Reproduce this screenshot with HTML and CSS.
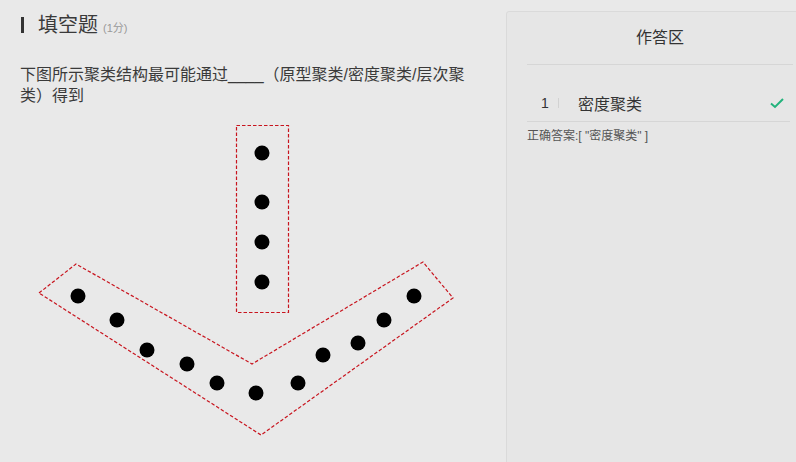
FILE: index.html
```html
<!DOCTYPE html>
<html lang="zh">
<head>
<meta charset="utf-8">
<link rel="stylesheet" href="styles.css">
</head>
<body>
<div class="page">
  <main class="question">
    <div class="q-head">
      <span class="q-bar"></span>
      <span class="q-type">填空题</span>
      <span class="q-score">(1分)</span>
    </div>
    <p class="q-text">下图所示聚类结构最可能通过____（原型聚类/密度聚类/层次聚类）得到</p>
    <svg class="q-figure" width="460" height="330" viewBox="20 115 460 330">
      <g fill="none" stroke="#c8141e" stroke-width="1.2" stroke-dasharray="3.5 2">
        <rect x="236.5" y="125.5" width="52" height="187"/>
        <polygon points="39,293 76,264 252,364 423,262 453,298 261,435"/>
      </g>
      <g fill="#000">
        <circle cx="262" cy="153" r="7.5"/>
        <circle cx="262" cy="202" r="7.5"/>
        <circle cx="262" cy="242" r="7.5"/>
        <circle cx="262" cy="282" r="7.5"/>
        <circle cx="78" cy="296" r="7.5"/>
        <circle cx="117" cy="320" r="7.5"/>
        <circle cx="147" cy="350" r="7.5"/>
        <circle cx="187" cy="364" r="7.5"/>
        <circle cx="217" cy="383" r="7.5"/>
        <circle cx="256" cy="393" r="7.5"/>
        <circle cx="298" cy="383" r="7.5"/>
        <circle cx="323" cy="355" r="7.5"/>
        <circle cx="358" cy="343" r="7.5"/>
        <circle cx="384" cy="320" r="7.5"/>
        <circle cx="414" cy="296" r="7.5"/>
      </g>
    </svg>
  </main>
  <aside class="answer-panel">
    <div class="panel-title">作答区</div>
    <div class="answer-row">
      <span class="answer-num">1</span>
      <span class="answer-sep"></span>
      <span class="answer-text">密度聚类</span>
      <svg class="answer-check" width="14" height="11" viewBox="0 0 14 11">
        <polyline points="1,5.5 5,9 13,1" fill="none" stroke="#22b37c" stroke-width="2"/>
      </svg>
    </div>
    <div class="correct">正确答案:[ "密度聚类" ]</div>
  </aside>
</div>
</body>
</html>
```

FILE: styles.css
```css
html, body {
  margin: 0;
  padding: 0;
  background: #e9e9e9;
  overflow: hidden;
}
body {
  font-family: "Liberation Sans", "Noto Sans CJK SC", sans-serif;
  color: #333;
}
.page {
  display: flex;
  width: 796px;
  height: 462px;
  overflow: hidden;
}
.question {
  width: 506px;
  flex: none;
  padding: 14px 0 0 20px;
  box-sizing: border-box;
}
.q-head {
  display: flex;
  align-items: baseline;
  height: 22px;
}
.q-bar {
  display: inline-block;
  width: 3px;
  height: 16px;
  background: #333;
  margin-left: 1px;
  margin-right: 14px;
  align-self: center;
}
.q-type {
  font-size: 20px;
  line-height: 22px;
  color: #3a3a3a;
}
.q-score {
  font-size: 11px;
  color: #999;
  margin-left: 5px;
}
.q-text {
  width: 452px;
  margin: 28px 0 0;
  font-size: 16px;
  line-height: 21px;
  color: #3a3a3a;
}
.q-figure {
  display: block;
  margin-top: 9px;
}
.answer-panel {
  flex: none;
  width: 306px;
  margin-top: 11px;
  height: 470px;
  box-sizing: border-box;
  border: 1px solid #dadada;
  border-radius: 3px;
  background: #e6e6e6;
  padding: 0 0 0 20px;
}
.panel-title {
  width: 266px;
  text-align: center;
  font-size: 16px;
  line-height: 52px;
  border-bottom: 1px solid #d6d6d6;
  color: #333;
}
.answer-row {
  width: 263px;
  display: flex;
  align-items: center;
  height: 20px;
  padding: 28px 0 8px;
  border-bottom: 1px solid #d6d6d6;
}
.answer-num {
  font-size: 14px;
  margin-left: 14px;
  width: 17px;
  color: #333;
}
.answer-sep {
  width: 1px;
  height: 10px;
  background: #d2d2d2;
  margin-right: 19px;
}
.answer-text {
  font-size: 16px;
  color: #333;
  flex: 1;
}
.answer-check {
  margin-right: 6px;
}
.correct {
  font-size: 12px;
  line-height: 16px;
  padding-top: 6px;
  color: #555;
}
```
